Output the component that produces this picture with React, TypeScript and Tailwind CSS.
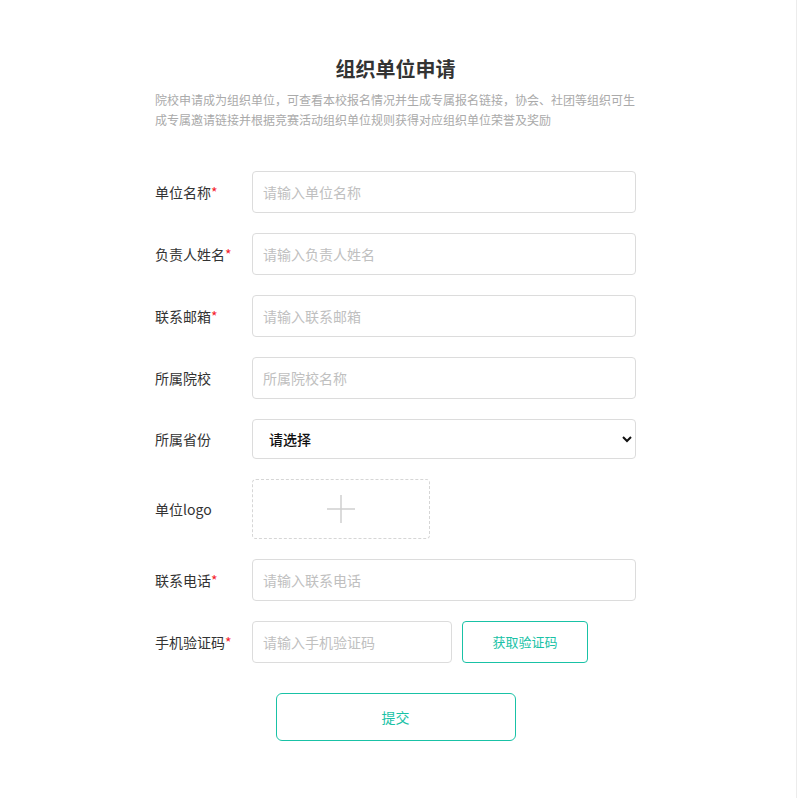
import type { FC } from 'react';

const font = { fontFamily: '"Noto Sans CJK SC", "Noto Sans", sans-serif' };

type FieldProps = {
  label: string;
  required?: boolean;
  placeholder: string;
};

const Label: FC<{ label: string; required?: boolean }> = ({ label, required }) => (
  <div className="w-[97px] shrink-0 text-[14px] text-[#333]">
    {label}
    {required && <span className="text-[#f5222d]">*</span>}
  </div>
);

const Field: FC<FieldProps> = ({ label, required, placeholder }) => (
  <div className="flex items-center">
    <Label label={label} required={required} />
    <input
      className="h-[42px] w-[384px] rounded-[4px] border border-[#dcdcdc] px-[10px] text-[14px] text-[#333] outline-none placeholder:text-[#c0c0c0]"
      placeholder={placeholder}
    />
  </div>
);

const App: FC = () => {
  return (
    <div className="min-h-[798px] w-[797px] border-r border-[#ececec] bg-white" style={font}>
      <div className="w-[791px] pt-[54px]">
        <div className="mx-auto w-[481px]">
          <h1 className="text-center text-[20px] font-bold leading-[30px] text-[#333]">组织单位申请</h1>
          <p className="mt-[6px] text-[12px] leading-[20px] text-[#aaa]">
            院校申请成为组织单位，可查看本校报名情况并生成专属报名链接，协会、社团等组织可生成专属邀请链接并根据竞赛活动组织单位规则获得对应组织单位荣誉及奖励
          </p>

          <div className="mt-[41px] flex flex-col gap-[20px]">
            <Field label="单位名称" required placeholder="请输入单位名称" />
            <Field label="负责人姓名" required placeholder="请输入负责人姓名" />
            <Field label="联系邮箱" required placeholder="请输入联系邮箱" />
            <Field label="所属院校" placeholder="所属院校名称" />

            <div className="flex items-center">
              <Label label="所属省份" />
              <select className="h-[40px] w-[384px] rounded-[4px] border border-[#dcdcdc] bg-white pl-[12px] pr-[2px] text-[14px] font-medium text-[#111] outline-none">
                <option>请选择</option>
              </select>
            </div>

            <div className="flex items-center">
              <Label label="单位logo" />
              <div className="flex h-[60px] w-[178px] items-center justify-center rounded-[4px] border border-dashed border-[#d6d6d6]">
                <svg width="30" height="30" viewBox="0 0 30 30" fill="none" stroke="#d0d0d0" strokeWidth="1.5">
                  <path d="M15 1v28M1 15h28" />
                </svg>
              </div>
            </div>

            <Field label="联系电话" required placeholder="请输入联系电话" />

            <div className="flex items-center">
              <Label label="手机验证码" required />
              <input
                className="h-[42px] w-[200px] rounded-[4px] border border-[#dcdcdc] px-[10px] text-[14px] text-[#333] outline-none placeholder:text-[#c0c0c0]"
                placeholder="请输入手机验证码"
              />
              <button className="ml-[10px] h-[42px] w-[126px] rounded-[4px] border border-[#19c2a6] bg-white text-[13px] text-[#19c2a6]">
                获取验证码
              </button>
            </div>
          </div>

          <div className="mt-[30px] flex justify-center">
            <button className="h-[48px] w-[240px] rounded-[6px] border border-[#19c2a6] bg-white text-[14px] text-[#19c2a6]">
              提交
            </button>
          </div>
        </div>
      </div>
    </div>
  );
};

export default App;
